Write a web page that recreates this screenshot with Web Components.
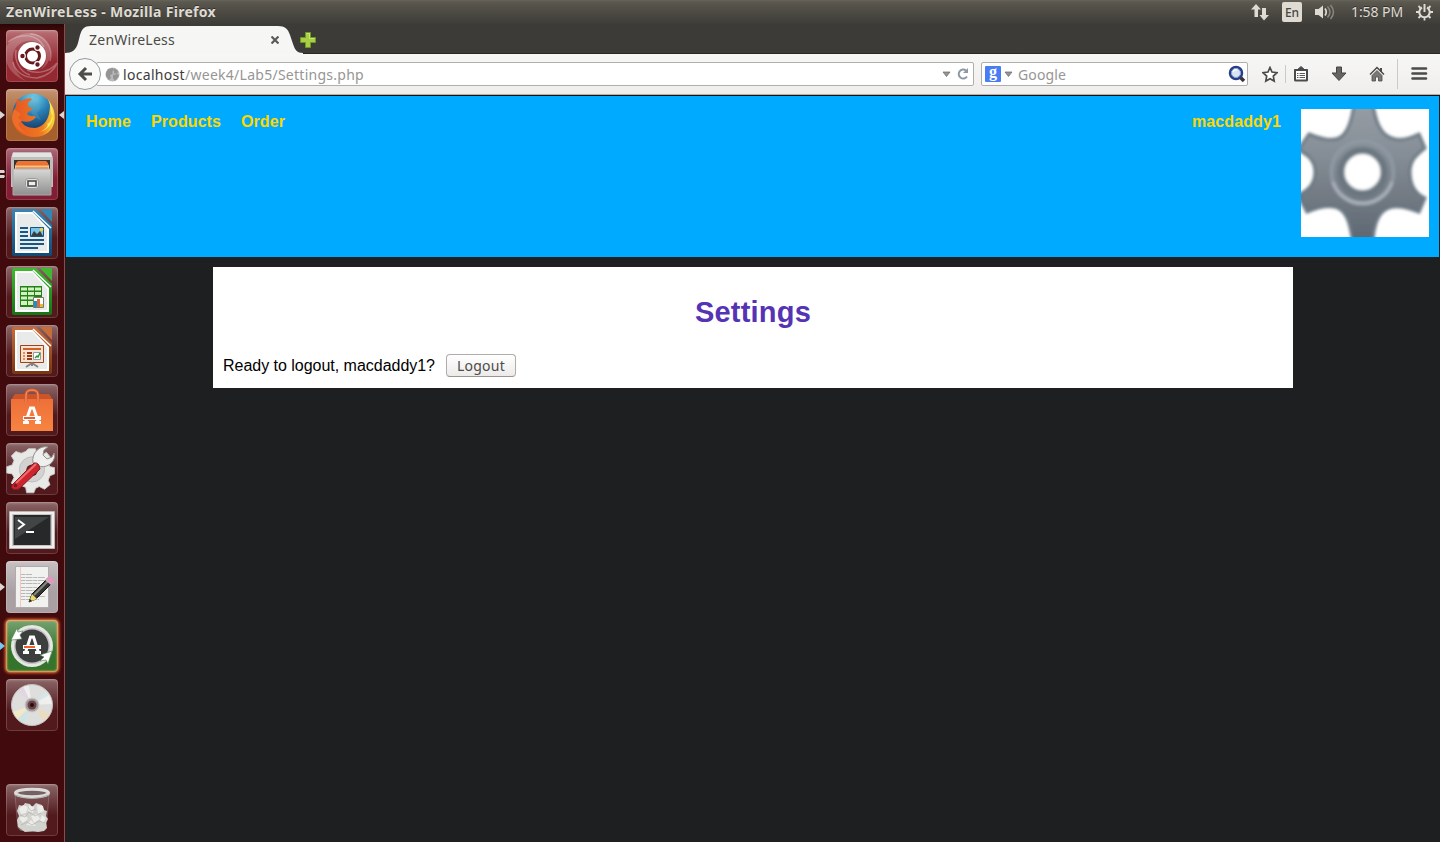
<!DOCTYPE html>
<html lang="en">
<head>
<meta charset="utf-8">
<title>ZenWireLess</title>
<style>
body{margin:0;width:1440px;height:842px;overflow:hidden;background:#1e1f21;font-family:"Noto Sans","Open Sans",sans-serif}
</style>
</head>
<body>
<desktop-shell></desktop-shell>
<script>
const make=(name,html,init)=>customElements.define(name,class extends HTMLElement{
  connectedCallback(){
    if(this.shadowRoot)return;
    this.attachShadow({mode:'open'}).innerHTML=html;
    if(init)init(this,this.shadowRoot);
  }
});

/* A single-line label whose tracking is adjusted to fill the given width. */
make('ui-label',`<style>:host{display:inline-block;white-space:pre;flex:none}span{display:inline-block}</style><span><slot></slot></span>`,(el,root)=>{
  const w=+el.getAttribute('width'),s=root.querySelector('span'),n=el.textContent.length;
  s.style.letterSpacing=((w-s.getBoundingClientRect().width)/n)+'px';
  el.style.width=w+'px';
});

make('top-panel',`<style>
:host{display:flex;align-items:center;height:24px;box-sizing:border-box;background:linear-gradient(#66635a 0,#5b5850 2px,#4c4a43 12px,#3e3d38 24px);color:#dfdbd2;font-size:14px;line-height:24px;padding-left:6px;text-shadow:0 -1px #33322e}
b{font-weight:700}.sp{flex:1}svg{display:block;flex:none}
.en{width:20px;height:20px;border-radius:2px;background:#dfdbd2;color:#484640;text-shadow:none;font-size:12px;font-weight:500;line-height:21px;text-align:center;margin:0 13px 0 13px}
</style>
<b><ui-label width="210">ZenWireLess - Mozilla Firefox</ui-label></b><span class="sp"></span>
<svg width="18" height="18" viewBox="0 0 18 18" fill="#dfdbd2"><path d="M0 6.500 5 1l5 5.500H7V14H3.500V6.500zM8.500 12H11V5h4v7h3l-5 5.500z"/></svg>
<div class="en"><ui-label width="14">En</ui-label></div>
<svg width="21" height="18" viewBox="0 0 21 18" fill="none"><path d="M0 6h3.500L8 2.500v13L3.500 12H0z" fill="#dfdbd2"/><path d="M10 5.500q2.500 3.500 0 7" stroke="#dfdbd2" stroke-width="1.700"/><path d="M12.500 3.500q5 5.500 0 11M15.500 2q6 7 0 14" stroke="#89867d" stroke-width="1.500"/></svg>
<ui-label width="52" style="margin-left:15px">1:58 PM</ui-label>
<svg style="margin:0 7px 0 13px" width="17" height="18" viewBox="0 0 17 18" fill="none" stroke="#dfdbd2"><path d="M6 4.500A5.200 5.200 0 1 0 11 4.500" stroke-width="2"/><path d="M8.500 1v8" stroke-width="2"/><path d="M0 9h3m11 0h3M2.500 3l2 2m8 0 2-2M2.500 15l2-2m8 0 2 2M8.500 14v3.500" stroke-width="1.800"/></svg>`);

const art={
ubuntu:`<rect width="52" height="52" rx="4" fill="#fff" opacity=".08"/><path d="M0 17C12-3 37-1 44 19 46 29 40 37 34 40 42 33 43 20 34 14 24 7 9 12 7 25 6 36 11 45 20 51 3 44-3 31 0 17z" fill="#fff" opacity=".2"/><path d="M2 12C14 2 32 4 38 17M7 32C9 42 18 48 31 48 40 46 48 41 51 33 45 41 32 45 21 40M24 4C38 4 48 17 44 31M10 20C8 31 14 42 24 45" fill="none" stroke="#fff" stroke-width="1.500" opacity=".28"/><circle cx="26" cy="26" r="14" fill="#fff"/><circle cx="26.500" cy="26" r="7" fill="none" stroke="#67191e" stroke-width="3"/><g stroke="#fff" stroke-width="1.200"><circle cx="16.500" cy="26" r="2.800" fill="#67191e"/><circle cx="31.500" cy="17.500" r="2.800" fill="#67191e"/><circle cx="31.500" cy="34.500" r="2.800" fill="#67191e"/></g>`,
firefox:`<radialGradient id="b" cx=".5" cy=".1" r=".8"><stop stop-color="#74d5ee"/><stop offset=".5" stop-color="#287fb5"/><stop offset="1" stop-color="#183865"/></radialGradient><linearGradient id="f"><stop stop-color="#e65524"/><stop offset=".7" stop-color="#f07920"/><stop offset="1" stop-color="#f8dc3c"/></linearGradient><circle cx="27" cy="25" r="20.500" fill="url(#b)"/><path d="M23 5l8 2-2 6 6 5-4 6 4 7-7-3-6-10z" fill="#6da3b3" opacity=".3"/><path d="M42 11c3 4 2 8 1 14-2 8-7 13-14 14-8 0-12-3-14-7 7 2 12 0 15-4-3-2-6 0-9-3 1-3 5-3 5-6-4-1-5-2-4-5 1-2 3-2 4-4-5-1-8 0-10 2-2 0-3-1-5-2-1 3 0 6-2 9-7 13 0 28 19 29 17 0 23-13 20-26-1-4-3-8-6-11z" fill="url(#f)"/><path d="M42 10c4 8 1 12 5 17-2 2-1 6-6 8 3 0-2 7-8 8 16-3 17-21 9-33z" fill="#ffed63"/><path d="M8 20l7 5-3 4 4 3c-5 0-5 5 4 12C8 41 3 30 8 20z" fill="#f47b2b" opacity=".6"/>`,
files:`<path d="M7 4h38l2 6v29H5V10z" fill="#bebebd"/><path d="M7 5h38l1 4H6z" fill="#e4e3e1"/><path d="M8 12h36v12H8z" fill="#343434"/><path d="M10 15l2-2h28l2 2v7H10z" fill="#ed7331"/><path d="M9 17h34v5H9z" fill="#f8c488"/><path d="M9 17h34M10 20h32" stroke="#e36d30"/><path d="M7 21h38v26H7z" fill="url(#silver)" stroke="#aaa"/><rect x="19.500" y="30.500" width="13" height="10" rx="3" fill="#e2e2e2" stroke="#999"/><rect x="22" y="33" width="8" height="5" fill="#eee" stroke="#444" stroke-width="1.500"/>`,
software:`<path d="M5 16l4-6h34l4 6z" fill="#cb542b"/><path d="M5 15h42v32H5z" fill="url(#orange)"/><path d="M20 18v-7q0-5 6-5t6 5v7" fill="none" stroke="#d7592d" stroke-width="3"/><path d="M20 18v-7q0-5 6-5t6 5v7" fill="none" stroke="#ff9b69"/><g fill="none" stroke="#fff" stroke-width="3"><path d="M19.500 38.500 24.500 24h3l5 14.500M17 38.500h6m6 0h6"/></g><path d="M17 32h18v4H17z" fill="#fff"/><path d="M18 33h11v2H18z" fill="#e95f2d"/>`,
settings:`<g transform="translate(2.600 3) scale(.9)"><path d="m22 3 8 0 1 6 5 2 6-4 5 6-3 6 2 4 5 1v7l-5 2-2 5 2 5-6 5-6-3-4 2-2 5h-8l-1-6-5-2-6 3-5-6 3-6-2-4-6-1v-7l6-2 2-5-3-5 5-5 6 2 5-2z" fill="#e8e8e6" stroke="#c9c9c8"/><circle cx="26" cy="26" r="14" fill="#d3d2d0" stroke="#bbb"/><circle cx="26" cy="27" r="6.500" fill="#542022"/></g><path d="M27 20C25 10 34 2 42 4l-4 3-1 5 4 4 5-2 2-4c3 8-7 16-15 13z" fill="#efefed" stroke="#92918f"/><path d="M6 42 28 20q5-1 6 6L13 46q-9 2-7-4z" fill="#ce242e" stroke="#831c25"/><path d="M10 40 30 21" stroke="#ec6e6d" stroke-width="2"/><circle cx="9.500" cy="42.500" r="1.800" fill="#791b22"/>`,
terminal:`<path d="M3.500 9.500h45v37h-45z" fill="#f0efed" stroke="#b9b7b4"/><path d="M6 12h40v32H6z" fill="#c5c4c2"/><path d="M7.500 13h37v30h-37z" fill="#262829"/><path d="M9 15h34L9 37z" fill="#55585a" opacity=".6"/><path d="M12 18l6 4.500-6 4.500m8 3h8" fill="none" stroke="#fff" stroke-width="2"/>`,
editor:`<path d="M9.500 5.500h33v41h-33z" fill="#f1f1ef" stroke="#adabac"/><path d="M14.500 6v40" stroke="#f4c6c1"/><path d="M15 13.500h11m-11 3h24m-24 3h24m-24 3h19m-19 4h24m-24 3h24m-24 3h16m-16 3h24m-24 3h18" stroke="#aaa" stroke-width=".8" stroke-dasharray="4 .6 7 .6"/><path d="M23 41l3-8 14-14 5 4-15 15z" fill="#343433" stroke="#171717"/><path d="M28 34 42 20" stroke="#868581" stroke-width="2"/><path d="m23 41 3-8 5 5z" fill="#ead96b"/><path d="m23 41 1-3 2 2z" fill="#222"/><path d="m39 19 3-3 6 5-3 3z" fill="#bbb"/><path d="m41 17q5-3 7 4l-2 2-6-5z" fill="#ed91c0"/>`,
updater:`<circle cx="26" cy="26" r="21" fill="#e6e6e4"/><circle cx="26" cy="26" r="18" fill="#c1c4c1"/><circle cx="26" cy="26" r="16.500" fill="#3d3f3e"/><path d="m11 8-6 12 11-1-2-4 3-4-5 1z" fill="#fff" stroke="#477946" stroke-width=".6"/><path d="m42 44 4-13-12 4 4 2-4 4 6-1z" fill="#fff" stroke="#477946" stroke-width=".6"/><path d="M19.500 32.500 24.500 17h3l5 15.500M17 32.500h6m6 0h6" fill="none" stroke="#fff" stroke-width="3"/><path d="M17 25h18v4H17z" fill="#fff"/><path d="M18 26h11v2H18z" fill="#ef6027"/>`,
disc:`<defs><clipPath id="dc"><circle cx="26" cy="26" r="20"/></clipPath></defs><circle cx="26" cy="26" r="20.500" fill="#dededd" stroke="#c6c1c1"/><g clip-path="url(#dc)" opacity=".5"><path d="M26 26 6 6l8-5z" fill="#e9cce9"/><path d="M26 26 14 1l8 0z" fill="#fff"/><path d="m26 26 23-22 1 12z" fill="#cceef3"/><path d="m26 26 24-14-2 13z" fill="#fff"/><path d="m26 26-23 8 4 10z" fill="#fff1b5"/><path d="m26 26-17 19 7 4z" fill="#bce9eb"/><path d="m26 26 16 22 8-10z" fill="#f5daa8"/></g><circle cx="26" cy="26" r="7" fill="#a69b9b" stroke="#ccc"/><circle cx="26" cy="26" r="4.500" fill="#644246"/><circle cx="26" cy="26" r="2" fill="#300b0c"/>`,
trash:`<path d="M9 11l3 33q14 7 28 0l3-33z" fill="#805258" opacity=".35" stroke="#c4adac"/><ellipse cx="26" cy="45" rx="13" ry="3" fill="#777"/><path d="m12 43-1-7 2-4-2-5 2-6 4 1 2-3 5 1 2 3 4-4 6 2 2 5 3 1-1 5 2 3-2 4 1 5-3 3-6 1-5-1-8 1z" fill="#d2d2cf"/><g fill="#ecece8"><path d="m13 25 4-4 5 2-2 6-5 1zM23 21l5 2-1 6-5-2zM31 21l6 1 1 5-6 3zM13 34l6-3 3 4-5 4zM25 32l6-2 3 5-6 4zM36 31l4 3-3 5-3-3zM20 41l5-5 5 6z"/></g><path d="m14 31 5 2 4-5 6 4 6-3M15 41l6-3 5 3 7-4 6 2M22 23l3 4 5-2" fill="none" stroke="#aaa" stroke-width=".6"/><ellipse cx="26" cy="9" rx="16.500" ry="3.800" fill="#776064" stroke="#dcdcda" stroke-width="3"/><path d="M9 11q17 7 34 0" fill="none" stroke="#aaa"/>`
};
const doc=(dark,mid,inner)=>`<linearGradient id="dg" x2="0" y2="1"><stop stop-color="${mid}"/><stop offset="1" stop-color="${dark}"/></linearGradient><path d="M8 2h22l16 16v29q0 2-2 2H8q-2 0-2-2V4q0-2 2-2z" fill="url(#dg)"/><path d="M34 2h12v13z" fill="${mid}"/><path d="M9 5h17.500L43 22v24H9z" fill="#fff"/><path d="M11 7h15.500L41 23v21H11z" fill="#e9eaea"/><path d="M27 4 45 21" stroke="#fff" stroke-width="1.500"/>${inner}`;
art.writer=doc('#104a75','#3686b5',`<g stroke="#14578a" stroke-width="2"><path d="M14 21h8m-8 4h8m-8 4h8m-8 4h24m-24 4h24m-24 4h18"/></g><path d="M24.500 20.500h13v9h-13z" fill="#78c5e7" stroke="#14547c"/><path d="m25 29 3-5 3 3 3-3 3 5z" fill="#383e40"/><circle cx="35.500" cy="22.500" r="1.800" fill="#f2d243"/>`);
art.calc=doc('#147414','#42b830',`<path d="M14 20h22v21H14z" fill="#238216"/><g fill="#d3f1c2"><path d="M15 21.500h6v3h-6zm7 0h6v3h-6zm7 0h6v3h-6zM15 26h6v3h-6zm7 0h6v3h-6zm7 0h6v3h-6zM15 30.500h6v3h-6zm7 0h6v3h-6zM15 35h6v4h-6zm7 0h6v4h-6z"/></g><path d="M27.500 31.500h10v10h-10z" fill="#fff" stroke="#777"/><path d="M28 35h3v6h-3z" fill="#1591d1"/><path d="M31 33h3v8h-3z" fill="#de6933"/><path d="M34 38h3v3h-3z" fill="#f0bb21"/>`);
art.impress=doc('#7b3510','#c76d3a',`<path d="M14.500 20.500h23v17h-23z" fill="#f5e4d6" stroke="#a4430f"/><path d="M17 24h18" stroke="#cf6127" stroke-width="2"/><path d="M17 28h2m-2 3h2m-2 3h2" stroke="#ee8a55" stroke-width="2"/><path d="M21 28h5m-5 3h5m-5 3h5" stroke="#993b14" stroke-width="2"/><path d="M27.500 27.500h7v7h-7z" fill="#fff" stroke="#999"/><path d="m29 33 2-2 1 1 2-4" fill="none" stroke="#26963a" stroke-width="1.400"/><path d="m26 38-6 4m6-4 6 4m-6-4v3" stroke="#828584" stroke-width="2"/>`);

make('launcher-tile',`<style>
:host{display:block;position:relative;width:65px;height:52px;flex:none;padding-left:6px;box-sizing:border-box}
.box{width:52px;height:52px;border-radius:4px;background:linear-gradient(#fff5 0,#fff0 60%),var(--tile,#521a1d);box-shadow:inset 0 0 0 1px #ffffff26,inset 0 2px 2px #fff2}
svg{display:block}
.pip{position:absolute;left:0;top:22px;width:5px;height:8px;background:var(--pip,#d9d5d3);clip-path:polygon(0 0,100% 50%,0 100%);display:none}
:host([run]) .pip{display:block}
:host([run=two]) .pip{clip-path:polygon(0 0,80% 0,100% 25%,80% 38%,0 38%,0 62%,80% 62%,100% 75%,80% 100%,0 100%)}
.focus{position:absolute;right:1px;top:22px;width:5px;height:8px;background:#d9d5d3;clip-path:polygon(100% 0,0 50%,100% 100%);display:none}
:host([focused]) .focus{display:block}
:host([glow]) .box{box-shadow:0 0 3px 1px #ff8142,inset 0 0 2px 1px #ffb069}
</style><div class="box"></div><i class="pip"></i><i class="focus"></i>`,(el,root)=>{
  root.querySelector('.box').innerHTML=`<svg width="52" height="52" viewBox="0 0 52 52"><defs><linearGradient id="silver" x2="0" y2="1"><stop stop-color="#d8d8d7"/><stop offset="1" stop-color="#8e8e8e"/></linearGradient><linearGradient id="orange" x2="0" y2="1"><stop stop-color="#ee6f39"/><stop offset="1" stop-color="#f78441"/></linearGradient></defs>${art[el.getAttribute('icon')]}</svg>`;
});

make('app-launcher',`<style>
:host{display:flex;flex-direction:column;gap:7px;width:65px;box-sizing:border-box;padding:6px 0;background:linear-gradient(#2a0606 0,#410a0c 7px);box-shadow:inset -1px 0 #93474b}
.end{margin-top:auto}
</style>
<launcher-tile icon="ubuntu" style="--tile:#8c1720"></launcher-tile>
<launcher-tile icon="firefox" run focused style="--tile:#a75f2d"></launcher-tile>
<launcher-tile icon="files" run="two" style="--tile:#821d33"></launcher-tile>
<launcher-tile icon="writer"></launcher-tile>
<launcher-tile icon="calc"></launcher-tile>
<launcher-tile icon="impress"></launcher-tile>
<launcher-tile icon="software"></launcher-tile>
<launcher-tile icon="settings"></launcher-tile>
<launcher-tile icon="terminal"></launcher-tile>
<launcher-tile icon="editor" run style="--tile:#aaa0a3"></launcher-tile>
<launcher-tile icon="updater" run glow style="--tile:#34742b;--pip:#75c7f0"></launcher-tile>
<launcher-tile icon="disc"></launcher-tile>
<launcher-tile class="end" icon="trash"></launcher-tile>`);

make('tab-strip',`<style>
:host{display:flex;height:30px;background:#3c3b37;box-shadow:inset 0 -1px #292825}
.tab{position:relative;width:239px;height:30px;flex:none}
.shape{position:absolute;inset:0}
.row{position:relative;display:flex;align-items:center;height:30px;padding:1px 0 0 24px;box-sizing:border-box;font-size:14px;color:#4b4b48}
.x{margin-left:96px}svg{display:block}.plus{margin:7px 0 0 -4px}
</style>
<div class="tab"><svg class="shape" width="239" height="30" viewBox="0 0 239 30"><path d="M0 30v-1c7 0 11-3 13-10l2-8c2-6 4-9 11-9H213c7 0 10 3 12 9l3 9c2 6 4 9 10 9v1z" fill="#f6f6f5"/></svg>
<div class="row"><ui-label width="86">ZenWireLess</ui-label><svg class="x" width="8" height="8" viewBox="0 0 8 8" stroke="#5a5a58" stroke-width="2.200"><path d="m.5.5 7 7m0-7-7 7"/></svg></div></div>
<svg class="plus" width="16" height="18" viewBox="0 0 16 18"><path d="M5.500 1.500h5v5h5v5h-5v5h-5v-5h-5v-5h5z" fill="#a9ce43" stroke="#6d9a24"/><path d="M6.500 2.500h3v5h5" fill="none" stroke="#cde47e"/></svg>`);

make('nav-bar',`<style>
:host{display:flex;align-items:center;height:40px;box-sizing:border-box;background:linear-gradient(#f7f7f6,#efeeec);font-size:14px;padding-left:4px;color:#3c3c3a}
svg{display:block;flex:none}
.back{position:relative;z-index:1;width:32px;height:32px;box-sizing:border-box;border:1px solid #929aa2;border-radius:50%;background:#f9f9f8;display:flex;align-items:center;justify-content:center;flex:none}
.field{display:flex;align-items:center;height:24px;box-sizing:border-box;border:1px solid #b1afaa;border-radius:2px;background:#fff;flex:none}
.url{width:878px;margin-left:-5px;padding-left:8px}
.url ui-label+ui-label{color:#969694}
.grow{flex:1}
.search{width:267px;margin-left:7px;padding-left:3px;color:#969694}
.g{display:block;width:16px;height:16px;background:#4a7df3;color:#fff;font:bold 16px/12px "Liberation Serif",serif;text-align:center;border-radius:1px}
.sep{width:1px;height:18px;background:#c5cbd0;margin:0 7px 0 7px}.sep.tall{height:30px;margin:0 13px 0 12px}
</style>
<div class="back"><svg width="16" height="16" viewBox="0 0 16 16" fill="none" stroke="#4c4c4b" stroke-width="3"><path d="M9 2 3 8l6 6M3 8h12"/></svg></div>
<div class="field url"><svg width="15" height="15" viewBox="0 0 15 15"><circle cx="7.500" cy="7.500" r="7" fill="#bababa"/><path d="m1 6 2-4 5-1 1 2-2 2 1 2-3 1 1 3-2 2-3-4zM9 1l4 3-1 3-3-1zM8 8l5-1 1 2-4 5-2-3z" fill="#949494"/></svg><ui-label width="62" style="margin-left:3px">localhost</ui-label><ui-label width="179">/week4/Lab5/Settings.php</ui-label><span class="grow"></span>
<svg width="9" height="6" viewBox="0 0 9 6"><path d="M1 1h7L4.500 5.500z" fill="#969696" stroke="#666" stroke-width=".7"/></svg><svg style="margin:0 4px 0 6px" width="12" height="14" viewBox="0 0 12 14" fill="none" stroke="#8d9aa6" stroke-width="2"><path d="M10 9.500A4.500 4.500 0 1 1 9 3.500"/><path d="M11 1v5H6z" stroke="none" fill="#8d9aa6"/></svg></div>
<div class="field search"><span class="g">g</span><svg style="margin-left:3px" width="9" height="6" viewBox="0 0 9 6"><path d="M1 1h7L4.500 5.500z" fill="#969696" stroke="#666" stroke-width=".7"/></svg><ui-label width="48" style="margin-left:5px">Google</ui-label><span class="grow"></span><svg style="margin-right:1px" width="18" height="18" viewBox="0 0 18 18"><path d="m12 12 4 4" stroke="#3c3532" stroke-width="3.500"/><circle cx="8" cy="8" r="6" fill="#d6e4f5" stroke="#293e89" stroke-width="2.500"/><circle cx="8" cy="8" r="4.500" fill="none" stroke="#8da2d3"/><path d="M5 7q1-3 4-2" fill="none" stroke="#fff" stroke-width="1.500"/></svg></div>
<svg style="margin-left:14px" width="16" height="17" viewBox="0 0 16 17"><path d="m8 1.500 2 4.500 5 .7-3.700 3.400.9 5-4.200-2.400-4.200 2.400.9-5L1 6.700 6 6z" fill="#fff" stroke="#4b4b4a" stroke-width="1.700"/></svg><span class="sep"></span>
<svg width="16" height="16" viewBox="0 0 16 16" fill="none" stroke="#4b4b4a"><rect x="2" y="4" width="12" height="10.500" rx=".5" fill="#fff" stroke-width="2"/><path d="M8 .5 12 4H4z" fill="#4b4b4a"/><path d="M1 4h14" stroke-width="1.500"/><path d="M4 7.500h1.500m1 0H12M4 9.500h1.500m1 0H12M4 11.500h1.500m1 0H12" stroke-width=".9"/></svg>
<svg style="margin-left:22px" width="16" height="16" viewBox="0 0 16 16"><path d="M5.500 1h5v6H15l-7 7.500L1 7h4.500z" fill="#646463" stroke="#454544"/></svg>
<svg style="margin-left:22px" width="16" height="16" viewBox="0 0 16 16"><path d="m1 8.500 7-7 7 7" fill="none" stroke="#4b4b4a" stroke-width="1.500"/><path d="M11 2h2v4h-2z" fill="#4b4b4a"/><path d="m3 9.500 5-5 5 5V15H9.500v-4h-3v4H3z" fill="#777" stroke="#4b4b4a" stroke-width=".8"/></svg>
<span class="sep tall"></span><svg width="17" height="16" viewBox="0 0 17 16" stroke="#4b4b4a" stroke-width="2.600" stroke-linecap="round"><path d="M1.500 2.500h13.500m-13.500 5h13.500m-13.500 5h13.500"/></svg>`);

make('settings-gear',`<style>:host{display:block;width:128px;height:128px;background:#fff;overflow:hidden}svg{display:block}</style>
<svg width="128" height="128" viewBox="0 0 128 128"><defs><linearGradient id="m" gradientUnits="userSpaceOnUse" x1="0" y1="0" x2="0" y2="128"><stop stop-color="#949ba3"/><stop offset=".35" stop-color="#858e96"/><stop offset=".6" stop-color="#777e87"/><stop offset="1" stop-color="#5e6973"/></linearGradient><filter id="s" x="-10%" y="-10%" width="120%" height="120%"><feGaussianBlur stdDeviation="1.600"/></filter></defs>
<g filter="url(#s)"><path d="M53-5C51 10 48 21 41 27 34 33 22 31 8 25L-3 41C9 46 14 53 14 63S9 81-3 86L6 103C18 98 32 95 40 101 48 107 50 122 52 134H72C72 120 76 106 84 101 92 95 105 98 118 103L124 89C113 84 109 74 109 63S114 47 124 39L118 25C106 31 94 33 85 26 77 20 74 9 72-5z" fill="url(#m)" stroke="#6b7883" stroke-width="3"/><circle cx="61.500" cy="63" r="31" fill="none" stroke="#8f9aa4" stroke-width="3.500"/><path d="M32 73A31 31 0 0 0 91 73" fill="none" stroke="#a7b0b9" stroke-width="3.500"/><circle cx="61.500" cy="63" r="21.500" fill="#fff" stroke="#6b7781" stroke-width="7"/></g></svg>`);

make('site-header',`<style>
:host{display:flex;height:162px;box-sizing:border-box;background:#00aaff;border:1px solid #1e1f21;border-top-color:#111;border-bottom:0;font:bold 16px/18px "Liberation Sans",Arial,sans-serif;color:#ffd700;padding:0 10px 0 20px}
nav{display:flex;gap:20px;flex:1}.t{padding-top:17px}settings-gear{margin:13px 0 0 20px}
</style><nav class="t"><ui-label width="45">Home</ui-label><ui-label width="70">Products</ui-label><ui-label width="44">Order</ui-label></nav><ui-label class="t" width="89">macdaddy1</ui-label><settings-gear></settings-gear>`);

make('settings-card',`<style>
:host{display:block;width:1080px;height:121px;box-sizing:border-box;margin:10px auto 0 148px;background:#fff;padding:0 10px;font:16px/18px "Liberation Sans",Arial,sans-serif;color:#000;overflow:hidden}
h1{margin:28px 0 0;font-size:29px;line-height:34px;text-align:center;color:#5533b5}
.row{display:flex;align-items:center;margin-top:25px;height:23px}
button{box-sizing:border-box;width:70px;height:23px;margin:0 0 0 11px;padding:0;border:1px solid #b0aca6;border-bottom-color:#99958f;border-radius:4px;background:linear-gradient(#fff,#edebea);font:14px/20px "Noto Sans",sans-serif;color:#4b4b49}
</style><h1><ui-label width="116">Settings</ui-label></h1><div class="row"><ui-label width="212">Ready to logout, macdaddy1?</ui-label><button><ui-label width="48">Logout</ui-label></button></div>`);

make('browser-window',`<style>:host{display:flex;flex-direction:column;flex:1;min-width:0}.line{height:1px;background:#b2b0ac;flex:none}tab-strip,nav-bar,site-header{flex:none}</style>
<tab-strip></tab-strip><nav-bar></nav-bar><div class="line"></div><site-header></site-header><settings-card></settings-card>`);

make('desktop-shell',`<style>:host{display:flex;flex-direction:column;width:1440px;height:842px}.work{display:flex;height:818px}app-launcher{flex:none}</style>
<top-panel></top-panel><div class="work"><app-launcher></app-launcher><browser-window></browser-window></div>`);
</script>
</body>
</html>
